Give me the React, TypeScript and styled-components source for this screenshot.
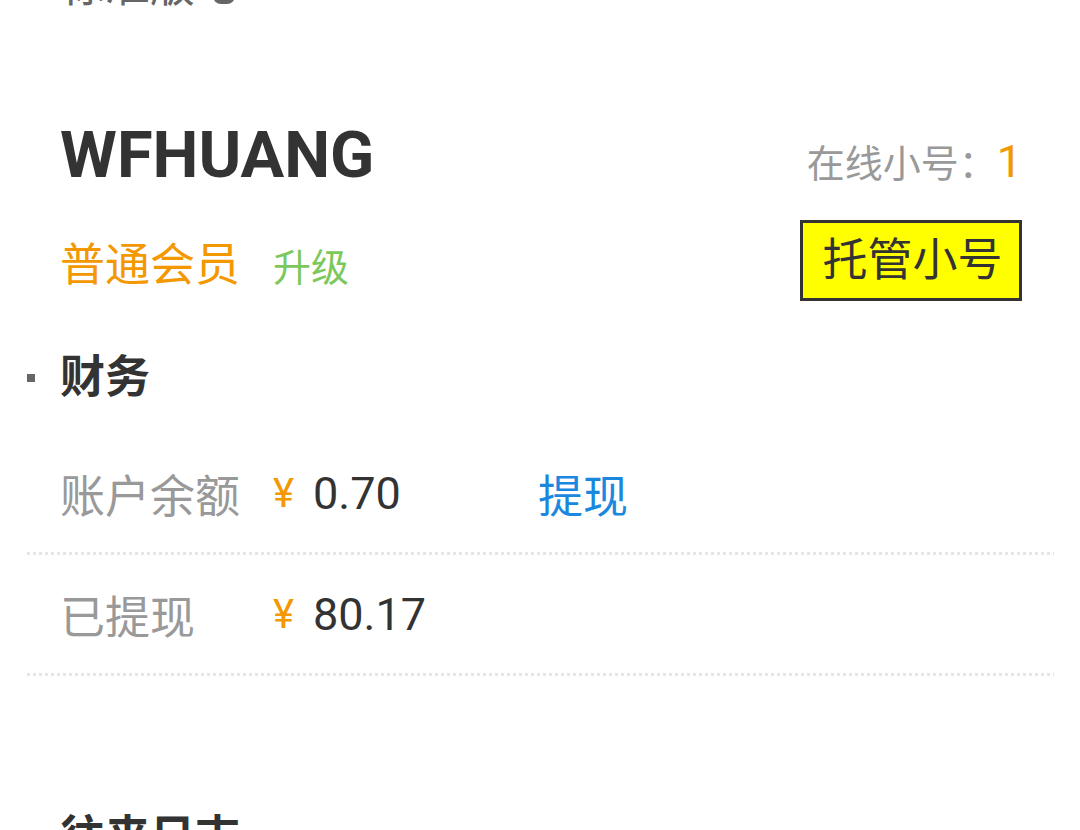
import styled, { createGlobalStyle } from 'styled-components';

const GlobalStyle = createGlobalStyle`
  html, body {
    margin: 0;
    padding: 0;
    background: #ffffff;
  }
  body {
    font-family: Roboto, 'Noto Sans CJK SC', sans-serif;
    color: #333333;
    overflow: hidden;
  }
`;

const Page = styled.div`
  width: 1080px;
  height: 830px;
  overflow: hidden;
  background: #ffffff;
`;

const TopLine = styled.div`
  display: flex;
  align-items: center;
  gap: 18px;
  margin-top: -36px;
  padding-left: 60px;
  height: 45px;
  font-size: 45px;
  line-height: 45px;
  color: #666666;
`;

const TopBadge = styled.span`
  display: inline-block;
  width: 22px;
  height: 30px;
  border-radius: 8px;
  background: #666666;
  margin-top: 4px;
`;

const Profile = styled.section`
  margin-top: 114px;
  padding: 0 58px 0 60px;
`;

const ProfileRow = styled.div<{ $align: string; $gap?: number }>`
  display: flex;
  justify-content: space-between;
  align-items: ${({ $align }) => $align};
  margin-top: ${({ $gap }) => $gap ?? 0}px;
`;

const UserName = styled.h1`
  margin: 0;
  font-size: 65px;
  line-height: 65px;
  font-weight: 700;
  color: #333333;
`;

const OnlineCount = styled.div`
  font-size: 38px;
  color: #999999;
`;

const CountNumber = styled.span`
  font-size: 45px;
  color: #f39800;
`;

const MemberInfo = styled.div`
  display: flex;
  align-items: baseline;
  gap: 33px;
  margin-top: 2px;
`;

const MemberLevel = styled.span`
  font-size: 45px;
  color: #f39800;
`;

const UpgradeLink = styled.a`
  font-size: 38px;
  color: #7cc85a;
  text-decoration: none;
`;

const HostButton = styled.button`
  box-sizing: border-box;
  height: 81px;
  width: 222px;
  padding: 0 0 0 3px;
  border: 3px solid #333333;
  background: #ffff00;
  font-family: Roboto, 'Noto Sans CJK SC', sans-serif;
  font-size: 45px;
  line-height: 75px;
  color: #333333;
`;

const SectionTitle = styled.h2<{ $top: number }>`
  display: flex;
  align-items: center;
  gap: 25px;
  margin: ${({ $top }) => $top}px 0 0;
  padding-left: 27px;
  height: 45px;
  font-size: 45px;
  line-height: 45px;
  font-weight: 700;
  color: #333333;

  &::before {
    content: '';
    width: 8px;
    height: 8px;
    background: #666666;
  }
`;

const RowList = styled.div`
  margin: 34px 26px 0 27px;
`;

const Row = styled.div`
  display: flex;
  align-items: center;
  height: 118px;
  padding-left: 33px;
  border-bottom: 3px solid transparent;
  border-image: repeating-linear-gradient(to right, #e6e6e6 0 3px, transparent 3px 6px) 0 0 3 0 / 0 0 3px 0 stretch;
`;

const Label = styled.span`
  width: 213px;
  font-size: 45px;
  color: #999999;
`;

const Yen = styled.span`
  width: 40px;
  font-size: 40px;
  color: #f39800;
`;

const Amount = styled.span`
  width: 225px;
  font-size: 45px;
  color: #333333;
`;

const ActionLink = styled.a`
  font-size: 45px;
  color: #1b88e0;
  text-decoration: none;
`;

const finance = [
  { label: '账户余额', amount: '0.70', action: '提现' },
  { label: '已提现', amount: '80.17' },
];

export default function App() {
  return (
    <Page>
      <GlobalStyle />
      <TopLine>
        <span>标准版</span>
        <TopBadge />
      </TopLine>

      <Profile>
        <ProfileRow $align="baseline">
          <UserName>WFHUANG</UserName>
          <OnlineCount>
            在线小号：<CountNumber>1</CountNumber>
          </OnlineCount>
        </ProfileRow>
        <ProfileRow $align="center" $gap={32}>
          <MemberInfo>
            <MemberLevel>普通会员</MemberLevel>
            <UpgradeLink>升级</UpgradeLink>
          </MemberInfo>
          <HostButton>托管小号</HostButton>
        </ProfileRow>
      </Profile>

      <SectionTitle $top={54}>财务</SectionTitle>
      <RowList>
        {finance.map((item) => (
          <Row key={item.label}>
            <Label>{item.label}</Label>
            <Yen>¥</Yen>
            <Amount>{item.amount}</Amount>
            {item.action && <ActionLink>{item.action}</ActionLink>}
          </Row>
        ))}
      </RowList>

      <SectionTitle $top={139}>往来日志</SectionTitle>
    </Page>
  );
}
